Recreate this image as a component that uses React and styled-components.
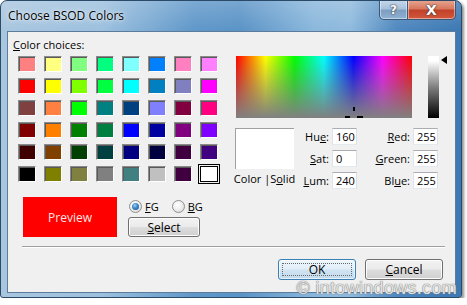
import React from "react";
import styled, { createGlobalStyle } from "styled-components";

const GlobalStyle = createGlobalStyle`
  html, body {
    margin: 0;
    padding: 0;
    background: #ffffff;
  }
  body {
    font-family: "Open Sans", "Noto Sans", sans-serif;
    font-size: 11px;
    color: #000;
  }
`;

const SWATCHES = [
  ["#ff8080", "#ffff80", "#80ff80", "#00ff80", "#80ffff", "#0080ff", "#ff80c0", "#ff80ff"],
  ["#ff0000", "#ffff00", "#80ff00", "#00ff40", "#00ffff", "#0080c0", "#8080c0", "#ff00ff"],
  ["#804040", "#ff8040", "#00ff00", "#008080", "#004080", "#8080ff", "#800040", "#ff0080"],
  ["#800000", "#ff8000", "#008000", "#008040", "#0000ff", "#0000a0", "#800080", "#8000ff"],
  ["#400000", "#804000", "#004000", "#004040", "#000080", "#000040", "#400040", "#400080"],
  ["#000000", "#808000", "#808040", "#808080", "#408080", "#c0c0c0", "#400040", "#ffffff"],
];

const Window = styled.div`
  position: relative;
  width: 462px;
  height: 298px;
  box-sizing: border-box;
  border: 1px solid #2b4a68;
  border-radius: 7px 7px 3px 3px;
  background:
    linear-gradient(180deg, rgba(255, 255, 255, 0.18) 0px, rgba(255, 255, 255, 0) 30px),
    linear-gradient(90deg, #a9c6df 0%, #9cc0de 22%, #5f97c9 42%, #5a93c6 52%, #8ab7dc 68%, #8fbadd 76%, #4f88bf 86%, #3c78b3 100%);
  box-shadow: 2px 2px 3px rgba(0, 0, 0, 0.45);
  display: flex;
  flex-direction: column;
  overflow: hidden;
`;

const TitleBar = styled.div`
  height: 30px;
  display: flex;
  align-items: flex-start;
`;

const Title = styled.div`
  padding-left: 7px;
  line-height: 30px;
  font-size: 12px;
  color: #000;
  text-shadow: 0 0 6px rgba(255, 255, 255, 0.9), 0 0 2px rgba(255, 255, 255, 0.8);
`;

const Controls = styled.div`
  margin-left: auto;
  margin-right: 5px;
  margin-top: -1px;
  display: flex;
`;

const CaptionButton = styled.div`
  box-sizing: border-box;
  height: 20px;
  width: ${(p) => (p.$close ? "48px" : "29px")};
  border: 1px solid #3a5877;
  border-top: none;
  border-left-width: ${(p) => (p.$close ? "0" : "1px")};
  border-radius: ${(p) => (p.$close ? "0 0 5px 0" : "0 0 0 5px")};
  background: ${(p) =>
    p.$close
      ? "linear-gradient(180deg, #e8a894 0%, #d7785f 45%, #c2412a 55%, #d2583c 100%)"
      : "linear-gradient(180deg, #c6d9eb 0%, #a8c2dd 45%, #7e9fc2 55%, #8fb1d3 100%)"};
  box-shadow: inset 0 0 0 1px rgba(255, 255, 255, 0.45);
  display: flex;
  align-items: center;
  justify-content: center;
  color: #fff;
  font-family: "DejaVu Sans", sans-serif;
  font-weight: bold;
  font-size: ${(p) => (p.$close ? "14px" : "12px")};
  text-shadow: 0 0 2px #3a3a3a, 0 0 1px #222;
`;

const Client = styled.div`
  flex: 1;
  margin: 0 5px 4px 6px;
  border: 1px solid #5d7c9b;
  background: #f0f0f0;
  display: flex;
  flex-direction: column;
`;

const Top = styled.div`
  height: 165px;
  display: flex;
`;

const LeftPane = styled.div`
  width: 227px;
  box-sizing: border-box;
  padding: 5px 0 0 5px;
`;

const Label = styled.div`
  line-height: 15px;
`;

const U = styled.span`
  text-decoration: underline;
`;

const SwatchGrid = styled.div`
  margin: 4px 0 0 5px;
  display: grid;
  grid-template-columns: repeat(8, 18px);
  grid-auto-rows: 16px;
  column-gap: 8px;
  row-gap: 6px;
`;

const Swatch = styled.div`
  box-sizing: border-box;
  background: ${(p) => p.$color};
  border: 1px solid;
  border-color: ${(p) => (p.$selected ? "#000" : "#8a8a8a #ffffff #ffffff #8a8a8a")};
  box-shadow: ${(p) => (p.$selected ? "none" : "inset 1px 1px 0 #5a5a5a")};
  outline: ${(p) => (p.$selected ? "1px solid #000" : "none")};
  outline-offset: 1px;
`;

const RightPane = styled.div`
  padding-top: 24px;
  display: flex;
  flex-direction: column;
`;

const SpectrumRow = styled.div`
  display: flex;
  align-items: flex-start;
`;

const Spectrum = styled.div`
  position: relative;
  margin-left: 1px;
  width: 176px;
  height: 62px;
  background:
    linear-gradient(180deg, rgba(128, 128, 128, 0) 0%, rgba(128, 128, 128, 1) 100%),
    linear-gradient(90deg, #ff0000 0%, #ffff00 16.7%, #00ff00 33.3%, #00ffff 50%, #0000ff 66.7%, #ff00ff 83.3%, #ff0000 100%);
`;

const Marker = styled.svg`
  position: absolute;
  left: 108px;
  top: 51px;
`;

const LumBar = styled.div`
  margin-left: 16px;
  width: 11px;
  height: 62px;
  background: linear-gradient(180deg, #ffffff 0%, #ffffff 8%, #808080 50%, #000000 100%);
`;

const LumArrow = styled.div`
  margin-left: 2px;
  width: 0;
  height: 0;
  border-top: 4px solid transparent;
  border-bottom: 4px solid transparent;
  border-right: 6px solid #000;
`;

const FieldsRow = styled.div`
  margin-top: 10px;
  display: flex;
`;

const SolidBox = styled.div`
  width: 59px;
  display: flex;
  flex-direction: column;
  align-items: center;
`;

const SolidSample = styled.div`
  box-sizing: border-box;
  width: 59px;
  height: 41px;
  background: #ffffff;
  border-top: 1px solid #a0a0a0;
  border-left: 1px solid #a0a0a0;
`;

const SolidCaption = styled.div`
  margin-top: 2px;
  line-height: 15px;
  white-space: nowrap;
`;

const FieldGrid = styled.div`
  display: grid;
  grid-template-columns: 35px 25px 50px 25px;
  grid-auto-rows: 17px;
  column-gap: 3px;
  row-gap: 5px;
`;

const FieldLabel = styled.div`
  text-align: right;
  line-height: 17px;
`;

const Field = styled.div`
  box-sizing: border-box;
  height: 17px;
  padding-left: 3px;
  line-height: 15px;
  background: #ffffff;
  border: 1px solid;
  border-color: #abadb3 #dbdfe6 #e3e9ef #e2e3ea;
`;

const Middle = styled.div`
  display: flex;
  padding-left: 15px;
`;

const Preview = styled.div`
  width: 94px;
  height: 40px;
  background: #ff0000;
  color: #ffe4e4;
  font-size: 12px;
  display: flex;
  align-items: center;
  justify-content: center;
`;

const RadioColumn = styled.div`
  margin-left: 11px;
  padding-top: 2px;
  display: flex;
  flex-direction: column;
`;

const RadioRow = styled.div`
  display: flex;
  align-items: center;
  height: 15px;
  padding-left: 1px;
`;

const Radio = styled.label`
  display: flex;
  align-items: center;
  margin-right: 13px;
  line-height: 15px;
`;

const RadioDot = styled.span`
  box-sizing: border-box;
  width: 13px;
  height: 13px;
  margin-right: 3px;
  border-radius: 50%;
  border: 1px solid #8e8f8f;
  background: radial-gradient(circle at 40% 35%, #ffffff 0%, #f2f2f2 40%, #d4d4d4 100%);
  display: flex;
  align-items: center;
  justify-content: center;

  &::after {
    content: "";
    display: ${(p) => (p.$checked ? "block" : "none")};
    width: 7px;
    height: 7px;
    border-radius: 50%;
    background: radial-gradient(circle at 40% 35%, #9fd0f5 0%, #3a86c8 45%, #1b4f8a 100%);
  }
`;

const Button = styled.div`
  box-sizing: border-box;
  width: ${(p) => p.$width || "78px"};
  height: ${(p) => p.$height || "21px"};
  border: 1px solid ${(p) => (p.$focused ? "#3c7fb1" : "#707070")};
  border-radius: 3px;
  background: ${(p) =>
    p.$focused
      ? "linear-gradient(180deg, #eef6fc 0%, #e1eef8 48%, #cfe3f2 52%, #c3dbee 100%)"
      : "linear-gradient(180deg, #f2f2f2 0%, #ebebeb 48%, #dddddd 52%, #cfcfcf 100%)"};
  box-shadow: inset 0 0 0 1px ${(p) => (p.$focused ? "rgba(255,255,255,0.6)" : "#fcfcfc")};
  display: flex;
  align-items: center;
  justify-content: center;
  position: relative;
  font-size: 12px;

  &::after {
    content: "";
    display: ${(p) => (p.$focused ? "block" : "none")};
    position: absolute;
    inset: 3px;
    border: 1px dotted #6a6a6a;
  }
`;

const SelectButton = styled(Button)`
  margin-top: 3px;
`;

const Separator = styled.div`
  margin: 9px 10px 0 14px;
  border-top: 1px solid #a0a0a0;
  border-bottom: 1px solid #ffffff;
`;

const ButtonRow = styled.div`
  margin-top: 11px;
  padding-right: 12px;
  display: flex;
  justify-content: flex-end;
  gap: 9px;
`;

const Watermark = styled.div`
  position: absolute;
  right: 4px;
  bottom: -2px;
  font-family: "Liberation Sans", Arial, sans-serif;
  font-size: 18px;
  letter-spacing: 0.3px;
  color: rgba(240, 240, 240, 0.9);
  text-shadow: 0 0 1px #7a7a7a, 0 0 1px #7a7a7a;
`;

const CrossMarker = () => (
  <Marker width="20" height="11" viewBox="0 0 20 11">
    <rect x="9" y="0" width="2" height="4" fill="#000" />
    <rect x="1" y="9" width="5" height="2" fill="#000" />
    <rect x="13" y="9" width="6" height="2" fill="#000" />
  </Marker>
);

const App = () => (
  <>
    <GlobalStyle />
    <Window>
      <TitleBar>
        <Title>Choose BSOD Colors</Title>
        <Controls>
          <CaptionButton>?</CaptionButton>
          <CaptionButton $close>X</CaptionButton>
        </Controls>
      </TitleBar>
      <Client>
        <Top>
          <LeftPane>
            <Label>
              <U>C</U>olor choices:
            </Label>
            <SwatchGrid>
              {SWATCHES.flatMap((row, r) =>
                row.map((c, i) => (
                  <Swatch key={`${r}-${i}`} $color={c} $selected={r === 5 && i === 7} />
                ))
              )}
            </SwatchGrid>
          </LeftPane>
          <RightPane>
            <SpectrumRow>
              <Spectrum>
                <CrossMarker />
              </Spectrum>
              <LumBar />
              <LumArrow />
            </SpectrumRow>
            <FieldsRow>
              <SolidBox>
                <SolidSample />
                <SolidCaption>
                  Color |S<U>o</U>lid
                </SolidCaption>
              </SolidBox>
              <FieldGrid>
                <FieldLabel>
                  Hu<U>e</U>:
                </FieldLabel>
                <Field>160</Field>
                <FieldLabel>
                  <U>R</U>ed:
                </FieldLabel>
                <Field>255</Field>
                <FieldLabel>
                  <U>S</U>at:
                </FieldLabel>
                <Field>0</Field>
                <FieldLabel>
                  <U>G</U>reen:
                </FieldLabel>
                <Field>255</Field>
                <FieldLabel>
                  <U>L</U>um:
                </FieldLabel>
                <Field>240</Field>
                <FieldLabel>
                  Bl<U>u</U>e:
                </FieldLabel>
                <Field>255</Field>
              </FieldGrid>
            </FieldsRow>
          </RightPane>
        </Top>
        <Middle>
          <Preview>Preview</Preview>
          <RadioColumn>
            <RadioRow>
              <Radio>
                <RadioDot $checked />
                <U>F</U>G
              </Radio>
              <Radio>
                <RadioDot />
                <U>B</U>G
              </Radio>
            </RadioRow>
            <SelectButton $width="72px" $height="20px">
              <span>
                <U>S</U>elect
              </span>
            </SelectButton>
          </RadioColumn>
        </Middle>
        <Separator />
        <ButtonRow>
          <Button $focused>OK</Button>
          <Button>
            <span>
              <U>C</U>ancel
            </span>
          </Button>
        </ButtonRow>
      </Client>
      <Watermark>© intowindows.com</Watermark>
    </Window>
  </>
);

export default App;
